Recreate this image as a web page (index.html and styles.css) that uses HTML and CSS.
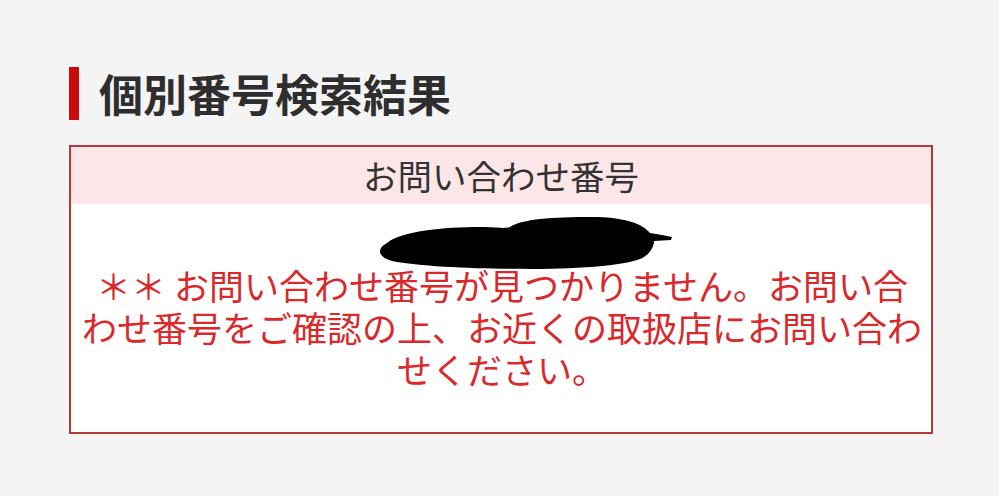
FILE: index.html
```html
<!DOCTYPE html>
<html lang="ja">
<head>
<meta charset="utf-8">
<link rel="stylesheet" href="styles.css">
</head>
<body>
<main class="page">
  <h1 class="title">個別番号検索結果</h1>
  <section class="result">
    <div class="result-head">お問い合わせ番号</div>
    <div class="result-body">
      <div class="number">
        <svg class="redact" width="340" height="60" viewBox="0 0 340 60">
          <path d="M55 26 C70 14 110 10 150 10 C165 10 172 12 178 10 C190 2 220 0 260 0 C290 0 310 6 318 16 L330 18 L340 20 L339 23 L322 24 C322 30 318 36 312 40 C300 48 250 52 200 52 C150 52 90 50 60 44 C46 40 44 32 55 26 Z" fill="#000"/>
        </svg>
      </div>
      <p class="message">＊＊ お問い合わせ番号が見つかりません。お問い合わせ番号をご確認の上、お近くの取扱店にお問い合わせください。</p>
    </div>
  </section>
</main>
</body>
</html>
```
FILE: styles.css
```css
html, body {
  margin: 0;
  padding: 0;
  background: #f4f4f4;
}
body {
  font-family: "Noto Sans CJK JP", "Noto Sans", sans-serif;
  width: 999px;
  height: 496px;
  overflow: hidden;
}
.page {
  padding: 67px 66px 0 69px;
}
.title {
  margin: 0;
  height: 53px;
  border-left: 10px solid #cc0a0a;
  padding-left: 20px;
  font-size: 44px;
  line-height: 53px;
  font-weight: 700;
  color: #2e2e2e;
}
.result {
  margin-top: 25px;
  border: 2px solid #b8373a;
  background: #fff;
}
.result-head {
  height: 57px;
  background: #fde6e7;
  text-align: center;
  font-size: 34.5px;
  line-height: 57px;
  color: #333;
}
.result-body {
  padding: 0 6px 42px 8px;
}
.number {
  height: 60px;
  display: flex;
  justify-content: center;
  align-items: flex-start;
  position: relative;
  z-index: 1;
}
.redact {
  display: block;
  margin-top: 13px;
  flex-shrink: 0;
}
.message {
  margin: 0;
  text-align: center;
  font-size: 35px;
  line-height: 42px;
  color: #d9292b;
}
```
